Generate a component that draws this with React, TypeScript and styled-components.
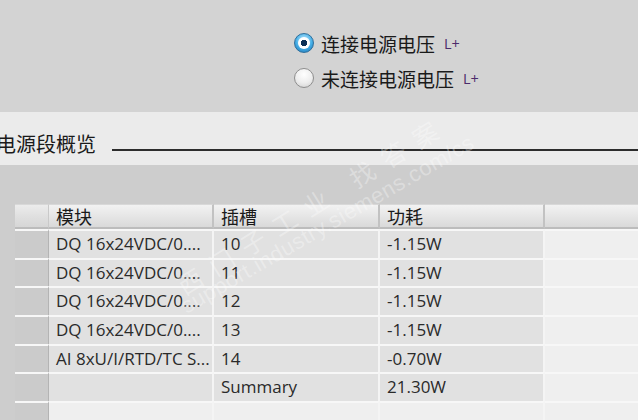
import React from 'react';
import styled, { createGlobalStyle } from 'styled-components';

const GlobalStyle = createGlobalStyle`
    html, body {
        margin: 0;
        padding: 0;
        width: 638px;
        height: 420px;
        overflow: hidden;
        background: #cdcdcd;
    }
`;

const Page = styled.div`
    position: relative;
    width: 638px;
    height: 420px;
    overflow: hidden;
    font-family: "Open Sans", "Noto Sans CJK SC", sans-serif;
    color: #262626;
`;

const Top = styled.div`
    height: 112px;
    background: #d3d3d3;
    box-sizing: border-box;
    padding: 32px 0 0 294px;
    display: flex;
    flex-direction: column;
    gap: 13px;
`;

const RadioRow = styled.label`
    display: flex;
    align-items: center;
    height: 22px;
    font-family: "Noto Sans CJK SC", sans-serif;
    font-size: 19px;
    color: #1a1a1a;
`;

const RadioDot = styled.span<{ $checked?: boolean }>`
    width: 20px;
    height: 20px;
    flex: none;
    border-radius: 50%;
    box-sizing: border-box;
    margin-right: 7px;
    position: relative;
    border: 1px solid ${p => (p.$checked ? '#2f6f9c' : '#8e8e8e')};
    background: ${p =>
        p.$checked
            ? 'radial-gradient(circle at 50% 35%, #c6eeff 0%, #45aee6 55%, #1a6fb0 100%)'
            : 'radial-gradient(circle at 50% 30%, #ffffff 0%, #ededed 55%, #cdcdcd 100%)'};

    &::after {
        content: '';
        display: ${p => (p.$checked ? 'block' : 'none')};
        position: absolute;
        left: 3px;
        top: 3px;
        width: 12px;
        height: 12px;
        border-radius: 50%;
        background: radial-gradient(circle, #0b2f55 0 3px, #ffffff 3.5px 6px);
    }
`;

const LPlus = styled.span`
    font-family: "Open Sans", sans-serif;
    font-size: 14.5px;
    color: #4b2b6b;
    margin-left: 9px;
    margin-top: 1px;
`;

const Band = styled.div`
    height: 53px;
    background: #ebebeb;
    display: flex;
    align-items: center;
    box-sizing: border-box;
    padding-top: 9px;
`;

const Title = styled.div`
    font-family: "Noto Sans CJK SC", sans-serif;
    font-size: 20px;
    margin-left: -4px;
    color: #1a1a1a;
    width: 116px;
    flex: none;
`;

const Rule = styled.div`
    flex: 1;
    height: 2px;
    margin-top: 13px;
    background: #2c2c2c;
`;

const TableArea = styled.div`
    padding: 39px 0 0 15px;
`;

const Grid = styled.div`
    display: grid;
    grid-template-columns: 34px 165px 166px 165px 108px;
`;

const HeadCell = styled.div<{ $first?: boolean }>`
    height: 25px;
    box-sizing: border-box;
    background: linear-gradient(#f2f2f2, #e6e6e6 50%, #d9d9d9);
    border-bottom: 2px solid #bcbcbc;
    border-right: 2px solid #c2c2c2;
    border-top: 1px solid #d8d8d8;
    padding-left: 7px;
    font-family: "Noto Sans CJK SC", sans-serif;
    font-size: 18px;
    line-height: 22px;
    color: #1a1a1a;
    ${p => p.$first && 'border-right: 1px solid #c9c9c9; background: linear-gradient(#ececec, #e0e0e0 50%, #d6d6d6);'}
`;

const Cell = styled.div<{ $kind?: 'rowhead' | 'data' | 'blank' }>`
    height: 28.7px;
    box-sizing: border-box;
    border-top: 2px solid #f7f7f7;
    border-right: 2px solid #f4f4f4;
    padding-left: 7px;
    font-size: 17px;
    line-height: 26px;
    white-space: nowrap;
    overflow: hidden;
    color: #2a2a2a;
    background: ${p =>
        p.$kind === 'rowhead' ? '#cbcbcb' : p.$kind === 'blank' ? '#efefef' : '#e1e1e1'};
    ${p => p.$kind === 'rowhead' && 'border-right: 1px solid #b4b4b4;'}
`;

const WatermarkCn = styled.div`
    position: absolute;
    left: 179px;
    top: 272px;
    line-height: 30px;
    transform: rotate(-32deg);
    transform-origin: left center;
    color: rgba(255, 255, 255, 0.32);
    font-family: "Noto Sans CJK SC", sans-serif;
    font-size: 25px;
    letter-spacing: 12px;
    white-space: pre;
    pointer-events: none;
`;

const WatermarkUrl = styled.div`
    position: absolute;
    left: 183px;
    top: 296px;
    line-height: 24px;
    transform: rotate(-30deg);
    transform-origin: left center;
    color: rgba(255, 255, 255, 0.32);
    font-family: "Liberation Sans", sans-serif;
    font-size: 22px;
    letter-spacing: 0.5px;
    white-space: nowrap;
    pointer-events: none;
`;

const rows = [
    ['DQ 16x24VDC/0....', '10', '-1.15W'],
    ['DQ 16x24VDC/0....', '11', '-1.15W'],
    ['DQ 16x24VDC/0....', '12', '-1.15W'],
    ['DQ 16x24VDC/0....', '13', '-1.15W'],
    ['AI 8xU/I/RTD/TC S...', '14', '-0.70W'],
    ['', 'Summary', '21.30W'],
];

function App() {
    return (
        <Page>
            <GlobalStyle />
            <Top>
                <RadioRow>
                    <RadioDot $checked />
                    连接电源电压<LPlus>L+</LPlus>
                </RadioRow>
                <RadioRow>
                    <RadioDot />
                    未连接电源电压<LPlus>L+</LPlus>
                </RadioRow>
            </Top>
            <Band>
                <Title>电源段概览</Title>
                <Rule />
            </Band>
            <TableArea>
                <Grid>
                    <HeadCell $first />
                    <HeadCell>模块</HeadCell>
                    <HeadCell>插槽</HeadCell>
                    <HeadCell>功耗</HeadCell>
                    <HeadCell />
                    {rows.map((r, i) => (
                        <React.Fragment key={i}>
                            <Cell $kind="rowhead" />
                            <Cell>{r[0]}</Cell>
                            <Cell>{r[1]}</Cell>
                            <Cell>{r[2]}</Cell>
                            <Cell $kind="blank" />
                        </React.Fragment>
                    ))}
                    <Cell $kind="rowhead" />
                    <Cell $kind="blank" />
                    <Cell $kind="blank" />
                    <Cell $kind="blank" />
                    <Cell $kind="blank" />
                </Grid>
            </TableArea>
            <WatermarkCn>西门子工业 找答案</WatermarkCn>
            <WatermarkUrl>support.industry.siemens.com/cs</WatermarkUrl>
        </Page>
    );
}

export default App;
